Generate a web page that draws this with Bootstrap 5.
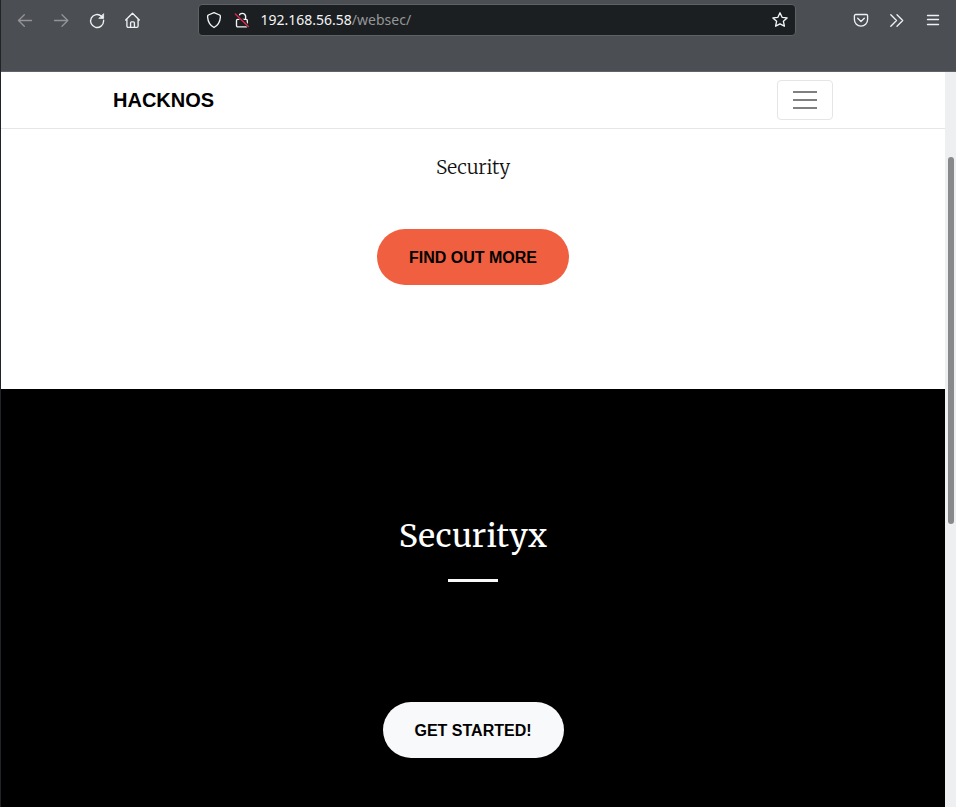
<!DOCTYPE html>
<html lang="en">
<head>
<meta charset="utf-8">
<title>HackNos</title>
<link href="https://cdn.jsdelivr.net/npm/bootstrap@5.3.0/dist/css/bootstrap.min.css" rel="stylesheet">
<style>
html,body{height:100%;overflow:hidden}
body{font-family:"Liberation Sans",sans-serif;background:#000}
.window{height:807px;border-left:1px solid #212326}
.chrome{height:72px;background:#4b4e53;border-bottom:1px solid #606267;color:#f0f1f2;padding:4px 13px 0 15px}
.chrome svg{display:block;flex:none;fill:none;stroke:currentColor;stroke-width:1.35;stroke-linecap:round;stroke-linejoin:round}
.tools{height:32px;gap:18px}
.left-tools{width:182px}
.right-tools{margin-left:56px}
.dim{color:#929498}
.address{width:598px;height:32px;background:#1c1f21;border:1px solid #5f6265;border-radius:4px;padding:0 6px;font:14px/20px "Noto Sans",sans-serif;color:#f4f4f4}
.address .gap-left{margin-left:10px}
.address .url{margin-left:9.5px}
.address .path{color:#949698}
.page-nav{height:57px;padding:0 112px;border-bottom:1px solid #e6e6e6}
.brand{font-size:20px;font-weight:700;line-height:30px;color:#000}
.page-nav .navbar-toggler{width:56px;height:40px;border:1px solid #e5e5e5;border-radius:4px;padding:4px 0}
.page-nav .bars{display:block;margin:auto}
.hero{height:260px;padding-top:23px}
.serif{font-family:"Merriweather","DejaVu Serif Condensed","DejaVu Serif",serif}
.tagline{font-size:19.2px;letter-spacing:-.2px;line-height:30px;margin:0 0 47px;color:#111;font-weight:300}
.cta{border:0;border-radius:300px;padding:17px 0 15px;height:56px;font-size:16px;font-weight:700;line-height:24px;color:#000;white-space:nowrap}
.cta-orange{background:#f05f40;width:192px}
.cta-light{background:#f8f9fa;width:181px}
.about{background:#000;color:#fff;padding-top:128px}
.about h2{font-size:32px;letter-spacing:.1px;line-height:38px;margin:0;font-weight:400}
.rule{width:50px;height:3px;background:#f8f9fa;margin:24px auto 120px}
.track{width:11px;background:#eeeff1;padding:85px 2px 0 3px}
.thumb{height:367px;border-radius:4px;background:#88898b}
</style>
<script src="https://cdn.jsdelivr.net/npm/bootstrap@5.3.0/dist/js/bootstrap.bundle.min.js"></script>
</head>
<body>
<div class="window d-flex flex-column">
  <header class="chrome d-flex align-items-start">
    <div class="left-tools tools d-flex align-items-center">
      <svg class="dim" width="18" height="18"><path d="M2.5 9.5h13M8.3 3.8 2.5 9.5l5.8 5.7"/></svg>
      <svg class="dim" width="18" height="18"><path d="M2.5 9.5h13M10 3.8l5.8 5.7-5.8 5.7"/></svg>
      <svg width="18" height="18"><path d="M15.6 9.2v.8A6.5 6.5 0 1 1 13.5 5.2"/><path d="M15.6 3v4.4h-4.4z" fill="currentColor" stroke-width=".8"/></svg>
      <svg width="18" height="18"><path d="M1.7 9 8.5 2.3 15.3 9M2.9 8v7a1.3 1.3 0 0 0 1.3 1.3h8.6a1.3 1.3 0 0 0 1.3-1.3V8M6.6 16v-4.2a1 1 0 0 1 1-1h1.8a1 1 0 0 1 1 1V16"/></svg>
    </div>
    <div class="address d-flex align-items-center">
      <svg width="18" height="18"><path d="M9 1.6 14.6 4c.9.3.9.9.8 2-.3 4.800-1.700 8-6.400 10.500C4.300 14 2.900 10.800 2.600 6c-.1-1.100-.1-1.700.8-2z"/></svg>
      <svg class="gap-left" width="18" height="18"><path d="M6 5.5V5a3.400 3.400 0 0 1 6.600 0v3M4.700 8.400h8.400a1.200 1.200 0 0 1 1.200 1.200v5a1.200 1.200 0 0 1-1.200 1.200H4.700a1.200 1.200 0 0 1-1.200-1.200V9.600a1.200 1.200 0 0 1 1.200-1.200z"/><path d="m3 3 13 13" stroke="#1c1f21" stroke-width="3"/><path d="m2.300 3 13 12.600" stroke="#e22850"/></svg>
      <span class="url">192.168.56.58<span class="path">/websec/</span></span>
      <svg class="ms-auto" width="18" height="18"><path d="m9 1.800 2.100 4.500 5 .6-3.700 3.400 1 4.900-4.400-2.400-4.400 2.400 1-4.900-3.700-3.400 5-.6z"/></svg>
    </div>
    <div class="right-tools tools d-flex align-items-center">
      <svg width="18" height="18"><path d="M3.700 3.500h10.600a1.300 1.300 0 0 1 1.300 1.300v3.700a6.600 6.600 0 0 1-13.200 0V4.800a1.300 1.300 0 0 1 1.300-1.300zM5.700 7.300 9 10.500l3.300-3.200"/></svg>
      <svg width="18" height="18"><path d="m2.800 3.800 5.700 5.700-5.700 5.700M9 3.800l5.700 5.700L9 15.200"/></svg>
      <svg width="18" height="18"><path d="M3.500 4.500h11M3.500 8.500h11M3.500 13.500h11"/></svg>
    </div>
  </header>
  <div class="d-flex flex-fill">
    <div class="flex-fill d-flex flex-column bg-white">
      <nav class="page-nav d-flex align-items-center justify-content-between">
        <a class="brand text-decoration-none" href="#">HACKNOS</a>
        <button class="navbar-toggler" type="button" aria-label="Toggle navigation"><svg class="bars" width="30" height="30" viewBox="0 0 30 30"><path d="M3 7h24M3 15h24M3 23h24" stroke="#808080" stroke-width="2"/></svg></button>
      </nav>
      <section class="hero text-center">
        <p class="tagline serif">Security</p>
        <a class="btn cta cta-orange" href="#">FIND OUT MORE</a>
      </section>
      <section class="about text-center flex-fill">
        <h2 class="serif">Securityx</h2>
        <div class="rule"></div>
        <a class="btn cta cta-light" href="#">GET STARTED!</a>
      </section>
    </div>
    <div class="track"><div class="thumb"></div></div>
  </div>
</div>
</body>
</html>
